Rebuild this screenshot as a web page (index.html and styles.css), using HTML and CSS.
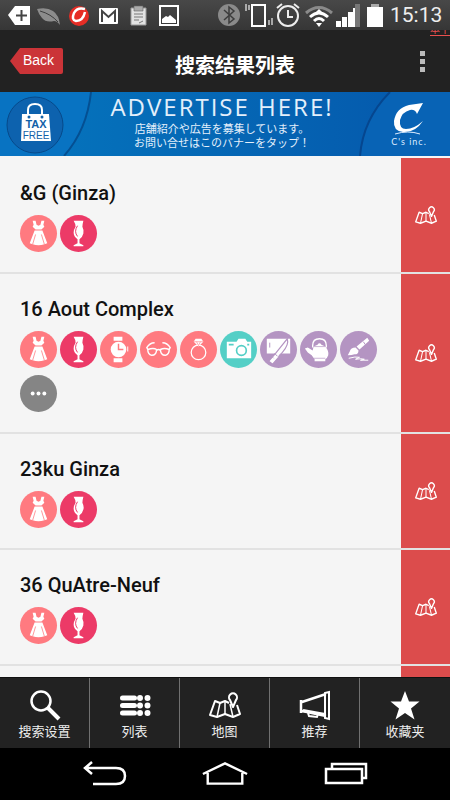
FILE: index.html
```html
<!DOCTYPE html>
<html lang="zh-CN">
  <head>
    <meta charset="UTF-8" />
    <meta name="viewport" content="width=device-width, initial-scale=1.0" />
    <title>搜索结果列表</title>
    <link rel="stylesheet" href="styles.css">
  </head>
  <body>
    <svg class="sprite" aria-hidden="true">
      <symbol id="dress" viewBox="0 0 38 38">
        <path fill="#fff" d="M13 6l3 0 1 4 2 1 2-1 1-4 3 0-1 4 1 2-3 3h-6l-3-3 1-2zM15 16h8l5 13-3 1q-6 2-12 0l-3-1z" />
        <path fill="none" stroke="#ff7a80" stroke-width=".8" d="M16 20l-3 10M22 20l3 10" />
      </symbol>
      <symbol id="glass" viewBox="0 0 38 38">
        <path fill="#fff" d="M14 6h10q-1 4-1 6 2 4 1 7-1 4-4 6v4l4 2v1H14v-1l4-2v-4q-4-3-4-7 0-3 2-6 0-3-2-6z" />
        <path fill="none" stroke="#ec3a67" d="M18 11q-4 6 0 11" />
      </symbol>
      <symbol id="watch" viewBox="0 0 38 38">
        <path fill="#fff" d="M14 6h9v4h-9zM14 28h9v4h-9zM28 16h1v5h-1z" />
        <circle cx="19" cy="19" r="8" fill="#fff" />
        <path fill="none" stroke="#ff7a80" stroke-width="1.500" d="M19 13v6h5" />
      </symbol>
      <symbol id="glasses" viewBox="0 0 38 38">
        <g fill="none" stroke="#fff" stroke-width="1.5">
          <path d="M8 19q6-2 9 0 0 6-5 6-4-1-4-6zM21 19q4-2 9 0 0 5-4 6-5 0-5-6zM17 20q2-2 4 0M8 19l-1-2q3-5 8-5M30 19l1-2q-3-5-8-5" />
        </g>
      </symbol>
      <symbol id="ring" viewBox="0 0 38 38">
        <circle cx="19" cy="22" r="7.500" fill="none" stroke="#fff" stroke-width="1.300" />
        <path fill="#fff" d="M16 8h6l2 3-5 5-5-5z" />
        <path fill="none" stroke="#ff7a80" stroke-width=".6" d="M14 11h10M17 11l2 4 2-4" />
      </symbol>
      <symbol id="camera" viewBox="0 0 38 38">
        <path fill="#fff" d="M7 11h10l2-3h7l2 3h4v17H7z" />
        <circle cx="22" cy="20" r="5" fill="none" stroke="#54cfc6" stroke-width="1.7" />
        <path fill="#54cfc6" d="M9 13h5v2H9zM28 13h2v2h-2z" />
      </symbol>
      <symbol id="kitchen" viewBox="0 0 38 38">
        <path fill="#fff" d="M7 8h24v15H7z" />
        <path fill="none" stroke="#b494c2" d="M10 12v5" />
        <path fill="#fff" stroke="#b494c2" stroke-width="1.2" d="M28 8q2 6-5 14l-3 3-1 2-6 7-4-3 7-8z" />
        <path fill="none" stroke="#b494c2" d="M15 23l3 3M13 27l1 1" />
      </symbol>
      <symbol id="kettle" viewBox="0 0 38 38">
        <path fill="none" stroke="#fff" stroke-width="1.4" d="M13 17V15q0-7 7-7t7 7v2" />
        <path fill="#fff" d="M14 16l4-2q2-3 4 0l4 2q4 5 3 9-1 3-3 4v2H15v-2l-3-4-4-3-3-4 3-1 5 3z" />
        <path fill="none" stroke="#b494c2" stroke-width=".7" d="M14 16h12M14 28h12" />
      </symbol>
      <symbol id="brush" viewBox="0 0 38 38">
        <path fill="#fff" d="M28 7l2 3-10 9-3-3zM16 17l3 3q0 4-4 4-3 1-7 1l2-4q1-4 6-4z" />
        <path fill="none" stroke="#b494c2" d="M24 11l2 3" />
        <path fill="none" stroke="#fff" d="M9 28q7-2 11-1l-4 2q6-1 9 0l-4 1h8" />
      </symbol>
      <symbol id="more" viewBox="0 0 38 38">
        <g fill="#fff">
          <circle cx="13" cy="19" r="2" />
          <circle cx="19" cy="19" r="2" />
          <circle cx="25" cy="19" r="2" />
        </g>
      </symbol>
      <symbol id="map" viewBox="0 0 32 28">
        <g fill="none" stroke="#fff" stroke-width="2" stroke-linejoin="round">
          <path d="M20 12l-4-2-5 2-5-2-5 14 7 2 8-3 8 3 7-3-3-9" />
          <path stroke-width="1.500" d="M11 12L8 26M16 10v13M21 13l3 13" />
          <path d="M24 16l-3-7a4 4 0 1 1 6 0z" />
        </g>
      </symbol>
    </svg>

    <div class="status">
      <svg class="status-left" viewBox="0 0 184 30" aria-hidden="true">
        <path fill="#fff" d="M8 15l7-9h15v19H15z" />
        <path fill="none" stroke="#444" stroke-width="2" d="M16 15.500h11M21.500 10v11" />
        <path fill="#8c8c8c" d="M37 9q10-2 16 2 6 4 7 14-3-4-6-4-8 2-12-3-3-3-5-9z" />
        <path fill="none" stroke="#3d3d3d" d="M40 11q11 3 18 11" />
        <circle cx="79" cy="16" r="10" fill="#e62d25" />
        <path fill="none" stroke="#fff" stroke-width="2.500" d="M85 9q-8-2-11 4-3 7 2 8 7 0 9-9" />
        <rect x="99" y="8" width="19" height="16" rx="1" fill="#fff" />
        <path fill="none" stroke="#444" stroke-width="2" d="M102 22V11l6.500 6 6.500-6v11" />
        <path fill="#e2e2e2" stroke="#999" d="M131 8h15v17h-15z" />
        <path fill="#aaa" stroke="#666" stroke-width=".6" d="M134 6h9v5h-9z" />
        <path fill="none" stroke="#777" d="M134 14h9M134 17h9M134 20h5M139 23l4-2" />
        <path fill="none" stroke="#fff" stroke-width="2" d="M160 6h18v19h-18z" />
        <path fill="#fff" d="M162 19l4-3 2 1 2-2 6 5v3h-14z" />
      </svg>
      <svg class="status-right" viewBox="0 0 170 30" aria-hidden="true">
        <circle cx="12" cy="15" r="11" fill="#8a8a8a" />
        <path fill="none" stroke="#3d3d3d" stroke-width="1.500" d="M7 10l10 9-5 4V7l5 4-10 9" />
        <path fill="none" stroke="#fff" stroke-width="2" d="M35 5h13v21H35z" />
        <path fill="none" stroke="#ccc" stroke-width="1.500" d="M29 4v7M32 5v5M52 20v5M55 18v7" />
        <circle cx="71" cy="16" r="10" fill="none" stroke="#eee" stroke-width="2" />
        <path fill="none" stroke="#eee" stroke-width="2" d="M71 10v7h5M60 8l5-4M82 8l-5-4" />
        <path fill="none" stroke="#8a8a8a" stroke-width="3" d="M89 13q13-11 26 0" />
        <path fill="none" stroke="#fff" stroke-width="3" d="M93 17q9-8 18 0M97 21q5-5 10 0" />
        <path fill="#fff" d="M102 27l-3-4h6zM102 9l4 4h-8z" />
        <path fill="#fff" d="M119 21h5v6h-5zM125 17h5v10h-5zM131 12h5v15h-5z" />
        <path fill="#fff" d="M136 8h2v19h-2z" />
        <path fill="#777" d="M138 4h5v23h-5z" />
        <path fill="#aaa" d="M154 4h8v3h-8z" />
        <path fill="#fff" d="M150 7h16v20h-16z" />
      </svg>
      <span class="clock">15:13</span>
    </div>

    <header class="header">
      <a class="back" href="#">Back</a>
      <h1 class="header-title">搜索结果列表</h1>
      <button class="menu" type="button" aria-label="菜单"><i></i><i></i><i></i></button>
      <a class="corner-link" href="#"><span>本千</span></a>
    </header>

    <a class="banner" href="#">
      <svg class="tax" viewBox="0 0 94 64" role="img" aria-label="TAX FREE">
        <path fill="#0873c2" d="M0 0h91q-4 38-27 64H0z" />
        <path fill="none" stroke="#044f92" stroke-width="2" d="M91 0q-4 38-27 64" />
        <circle cx="35" cy="33" r="28" fill="#0d62ae" stroke="#06498a" />
        <path fill="#fff" d="M22 22h27l2 27H21z" />
        <path fill="none" stroke="#fff" stroke-width="2" d="M28 26v-8q0-6 7-6t7 6v8" />
        <circle cx="29" cy="25" r="1.500" fill="#1261a8" />
        <circle cx="42" cy="25" r="1.500" fill="#1261a8" />
        <text class="tax-bold" x="36" y="36">TAX</text>
        <text class="tax-thin" x="36" y="47">FREE</text>
      </svg>
      <div class="banner-text">
        <strong>ADVERTISE HERE!</strong>
        <span lang="ja">店舗紹介や広告を募集しています。</span>
        <span lang="ja">お問い合せはこのバナーをタップ！</span>
      </div>
      <svg class="cs" viewBox="0 0 92 64" role="img" aria-label="C's inc.">
        <path fill="#0863b5" d="M32 0h60v64H2Q5 27 32 0z" />
        <path fill="none" stroke="#05468f" stroke-width="2" d="M2 64Q5 27 32 0" />
        <path fill="#fff" d="M65 11l-6 11q-2-5-7-4-8 2-10 10-1 9 6 9 8 0 17-8-8 12-20 11-10-1-9-11 2-13 15-16 7-1 14-2z" />
        <path fill="none" stroke="#dcecff" d="M37 42q13-4 25 0" />
        <text class="cs-text" x="51" y="53">C's inc.</text>
      </svg>
    </a>

    <main class="list">
      <article class="shop">
        <div class="shop-body">
          <h2>&amp;G (Ginza)</h2>
          <div class="tags">
            <svg class="tag coral"><use href="#dress" /></svg>
            <svg class="tag pink"><use href="#glass" /></svg>
          </div>
        </div>
        <a class="shop-map" href="#" aria-label="地图"><svg><use href="#map" /></svg></a>
      </article>
      <article class="shop">
        <div class="shop-body">
          <h2>16 Aout Complex</h2>
          <div class="tags">
            <svg class="tag coral"><use href="#dress" /></svg>
            <svg class="tag pink"><use href="#glass" /></svg>
            <svg class="tag coral"><use href="#watch" /></svg>
            <svg class="tag coral"><use href="#glasses" /></svg>
            <svg class="tag coral"><use href="#ring" /></svg>
            <svg class="tag teal"><use href="#camera" /></svg>
            <svg class="tag purple"><use href="#kitchen" /></svg>
            <svg class="tag purple"><use href="#kettle" /></svg>
            <svg class="tag purple"><use href="#brush" /></svg>
            <svg class="tag gray"><use href="#more" /></svg>
          </div>
        </div>
        <a class="shop-map" href="#" aria-label="地图"><svg><use href="#map" /></svg></a>
      </article>
      <article class="shop">
        <div class="shop-body">
          <h2>23ku Ginza</h2>
          <div class="tags">
            <svg class="tag coral"><use href="#dress" /></svg>
            <svg class="tag pink"><use href="#glass" /></svg>
          </div>
        </div>
        <a class="shop-map" href="#" aria-label="地图"><svg><use href="#map" /></svg></a>
      </article>
      <article class="shop">
        <div class="shop-body">
          <h2>36 QuAtre-Neuf</h2>
          <div class="tags">
            <svg class="tag coral"><use href="#dress" /></svg>
            <svg class="tag pink"><use href="#glass" /></svg>
          </div>
        </div>
        <a class="shop-map" href="#" aria-label="地图"><svg><use href="#map" /></svg></a>
      </article>
      <div class="shop">
        <div class="shop-body"></div>
        <div class="shop-map"></div>
      </div>
    </main>

    <nav class="tabs">
      <a href="#">
        <svg viewBox="0 0 32 32" fill="none" stroke="#fff">
          <circle cx="12" cy="12" r="9.500" stroke-width="2.500" />
          <path stroke-width="4" d="M19 19l11 11" />
        </svg>
        搜索设置
      </a>
      <a href="#">
        <svg viewBox="0 0 32 32" fill="none" stroke="#fff" stroke-width="5" stroke-linecap="round">
          <path d="M3.500 9h12M3.500 16.500h12M3.500 24h12" />
          <path stroke-width="6" d="M21 9h0M28.500 9h0M21 16.500h0M28.500 16.500h0M21 24h0M28.500 24h0" />
        </svg>
        列表
      </a>
      <a href="#">
        <svg><use href="#map" /></svg>
        地图
      </a>
      <a href="#">
        <svg viewBox="0 0 32 32" fill="none" stroke="#fff" stroke-width="2">
          <path stroke-width="2.500" d="M2 11v13M3 13l24-8M3 22l24 5" />
          <path d="M26 4l4-1v27l-4-1z" />
          <path d="M9 24l1 3 8 1 1-3" />
          <path stroke-width="3" d="M4 21.500l22 4" />
        </svg>
        推荐
      </a>
      <a href="#">
        <svg viewBox="0 0 32 32">
          <path fill="#fff" d="M16 2l4 10.500h10.500l-8.500 7 3.500 11-9.500-6.500-9.500 6.500 3.500-11-8.500-7H12z" />
        </svg>
        收藏夹
      </a>
    </nav>

    <div class="system">
      <button type="button" aria-label="返回">
        <svg viewBox="0 0 46 28" fill="none" stroke="#fff" stroke-width="2.500">
          <path d="M11 2L4 8l7 6M4 8h31q9 0 9 8t-9 8H12" />
        </svg>
      </button>
      <button type="button" aria-label="主页">
        <svg viewBox="0 0 50 28" fill="none" stroke="#fff" stroke-width="2.500">
          <path d="M2 14L25 3l23 11M7 13v11h36V13" />
        </svg>
      </button>
      <button type="button" aria-label="最近">
        <svg viewBox="0 0 46 28" fill="none" stroke="#fff" stroke-width="2.500">
          <path d="M3 9h36v14H3zM9 9V4h34v14h-4" />
        </svg>
      </button>
    </div>
  </body>
</html>
```
FILE: styles.css
```css
* {
  box-sizing: border-box;
}
body {
  display: flex;
  flex-direction: column;
  height: 100vh;
  margin: 0;
  overflow: hidden;
  background-color: #f5f5f5;
  color: #111;
  font-family: Roboto, "Noto Sans CJK SC", sans-serif;
}
a {
  color: inherit;
  text-decoration: none;
}
button {
  padding: 0;
  border: 0;
  background: none;
}
svg {
  display: block;
}
.sprite {
  position: absolute;
  width: 0;
  height: 0;
}

.status {
  display: flex;
  flex: none;
  align-items: center;
  height: 30px;
  background: linear-gradient(#484848, #363636);
}
.status-left {
  width: 184px;
  height: 30px;
}
.status-right {
  width: 170px;
  height: 30px;
  margin-left: auto;
}
.clock {
  width: 63px;
  padding-left: 3px;
  color: #eee;
  font-size: 21px;
  line-height: 20px;
}

.header {
  position: relative;
  display: grid;
  flex: none;
  grid-template-columns: 70px 1fr 50px;
  align-items: center;
  height: 62px;
  background-color: #222;
  color: #fff;
}
.back {
  width: 53px;
  height: 26px;
  margin-left: 10px;
  padding-left: 13px;
  border-radius: 2px;
  background-color: #cb3438;
  clip-path: polygon(0 50%, 10px 0, 100% 0, 100% 100%, 10px 100%);
  font-family: "Liberation Sans", sans-serif;
  font-size: 14px;
  line-height: 25px;
}
.header-title {
  margin: 10px 0 0;
  font-size: 20px;
  line-height: 28px;
  text-align: center;
}
.menu {
  display: flex;
  flex-direction: column;
  gap: 3px;
  padding-left: 20px;
}
.menu i {
  width: 5px;
  height: 5px;
  background-color: #bbb;
}
.corner-link {
  position: absolute;
  top: 0;
  right: 0;
  display: flex;
  align-items: flex-end;
  width: 20px;
  height: 6px;
  overflow: hidden;
  border-bottom: 1px solid #e8504f;
  color: #e8504f;
  font-size: 10px;
  line-height: 10px;
}

.banner {
  display: flex;
  flex: none;
  height: 64px;
  background: linear-gradient(90deg, #0576be, #0557ab);
  color: #fff;
}
.tax {
  width: 94px;
  height: 64px;
}
.tax text {
  fill: #1261a8;
  font-family: "Liberation Sans", sans-serif;
  text-anchor: middle;
}
.tax-bold {
  font-size: 11px;
  font-weight: 700;
}
.tax-thin {
  font-size: 10px;
}
.banner-text {
  display: flex;
  flex: 1;
  flex-direction: column;
  align-items: center;
  padding-right: 8px;
  color: #e3effb;
  font-family: "Noto Sans", "Noto Sans CJK JP", sans-serif;
  font-size: 11px;
  line-height: 14px;
  white-space: nowrap;
}
.banner-text strong {
  font-size: 24px;
  font-weight: 400;
  font-family: "Open Sans", sans-serif;
  letter-spacing: 2px;
  line-height: 30px;
}
.cs {
  width: 92px;
  height: 64px;
}
.cs-text {
  fill: #dcecff;
  font-family: Lato, sans-serif;
  font-size: 9px;
  letter-spacing: 1px;
  text-anchor: middle;
}

.list {
  flex: 1;
  min-height: 0;
  overflow: hidden;
  padding-top: 2px;
}
.shop {
  display: flex;
  min-height: 116px;
  border-bottom: 2px solid #e2e2e2;
}
.shop-body {
  flex: 1;
  padding: 23px 20px 20px;
}
.shop h2 {
  margin: 0 0 10px;
  font-size: 20px;
  font-weight: 500;
  line-height: 24px;
}
.tags {
  display: flex;
  flex-wrap: wrap;
  gap: 7px 3px;
}
.tag {
  width: 37px;
  height: 37px;
  border-radius: 50%;
}
.coral {
  background-color: #ff7a80;
}
.pink {
  background-color: #ec3a67;
}
.teal {
  background-color: #54cfc6;
}
.purple {
  background-color: #b494c2;
}
.gray {
  background-color: #858585;
}
.shop-map {
  display: flex;
  align-items: center;
  justify-content: center;
  width: 49px;
  background-color: #dc4c4c;
}
.shop-map svg {
  width: 22px;
  height: 20px;
}

.tabs {
  display: grid;
  flex: none;
  grid-template-columns: repeat(5, 1fr);
  height: 71px;
  border-top: 1px solid #111;
  background-color: #222;
}
.tabs a {
  display: flex;
  flex-direction: column;
  align-items: center;
  padding-top: 11px;
  border-right: 1px solid #707070;
  color: #eee;
  font-size: 13px;
  line-height: 22px;
}
.tabs a:last-child {
  border-right: 0;
}
.tabs svg {
  width: 32px;
  height: 32px;
}

.system {
  display: flex;
  flex: none;
  justify-content: center;
  gap: 73px;
  height: 52px;
  background-color: #000;
}
.system svg {
  width: 48px;
  height: 28px;
}
```
